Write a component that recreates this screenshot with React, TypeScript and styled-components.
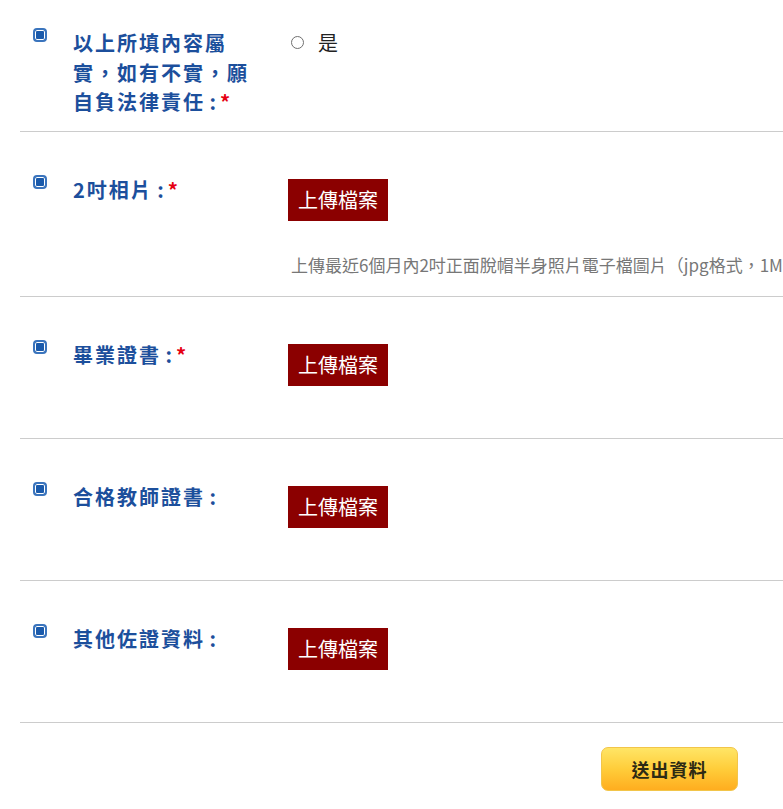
import React, { useState } from "react";
import styled, { createGlobalStyle } from "styled-components";

const GlobalStyle = createGlobalStyle`
  html, body {
    margin: 0;
    padding: 0;
    background: #fff;
    overflow-x: hidden;
  }
  body {
    font-family: "Noto Sans CJK TC", "Noto Sans", sans-serif;
  }
`;

const Form = styled.form`
  width: 1299px;
  margin-left: 20px;
`;

const Row = styled.div<{ $top?: number; $bottom?: number }>`
  display: flex;
  align-items: flex-start;
  padding: ${(p) => p.$top ?? 43}px 0 ${(p) => p.$bottom ?? 52}px 13px;
  border-bottom: 1px solid #cccccc;
`;

const Bullet = styled.span`
  flex: none;
  box-sizing: border-box;
  width: 14px;
  height: 14px;
  margin-right: 26px;
  border: 2px solid #3a74bd;
  border-radius: 4px;
  background: #1a5aab;
  box-shadow: inset 0 0 0 1px #ffffff;
`;

const Label = styled.div`
  flex: none;
  width: 190px;
  margin-right: 25px;
  color: #1c4f9c;
  font-size: 20px;
  font-weight: 700;
  line-height: 29.5px;
  letter-spacing: 2px;
`;

const Colon = styled.span`
  letter-spacing: 0;
  padding-right: 4px;
`;

const Required = styled.span`
  color: #e60012;
  letter-spacing: 0;
`;

const Value = styled.div`
  flex: 1;
  min-width: 0;
`;

const RadioLabel = styled.label`
  display: inline-flex;
  align-items: center;
  gap: 14px;
  margin-left: 3px;
  color: #222;
  font-size: 20px;
  line-height: 29.5px;
  cursor: pointer;
`;

const Radio = styled.input`
  appearance: none;
  box-sizing: border-box;
  width: 13px;
  height: 13px;
  margin: 0;
  border: 1px solid #6f6f6f;
  border-radius: 50%;
  background: #fff;

  &:checked {
    background: radial-gradient(circle, #1a5aab 0 3px, #fff 3.5px);
  }
`;

const UploadButton = styled.button`
  display: block;
  margin-top: 4px;
  padding: 6px 10px;
  border: 0;
  background: #8b0000;
  color: #fff;
  font-family: inherit;
  font-size: 20px;
  line-height: 30px;
  cursor: pointer;
`;

const Hint = styled.p`
  margin: 32px 0 0 3px;
  color: #777;
  font-size: 17px;
  line-height: 23px;
  white-space: nowrap;
`;

const Actions = styled.div`
  display: flex;
  justify-content: center;
  padding: 24px 0 20px;
`;

const SubmitButton = styled.button`
  width: 137px;
  height: 44px;
  border: 1px solid #f2c54a;
  border-radius: 7px;
  background: linear-gradient(to bottom, #ffe566 0%, #ffcd3a 50%, #ffad1f 100%);
  color: #2d2a14;
  font-family: inherit;
  font-size: 18px;
  font-weight: 700;
  letter-spacing: 1px;
  cursor: pointer;
`;

const FieldLabel: React.FC<{ text: string; required?: boolean }> = function ({
  text,
  required,
}) {
  return (
    <Label>
      {text}
      <Colon> :</Colon>
      {required && <Required>*</Required>}
    </Label>
  );
};

type UploadRowProps = {
  label: string;
  required?: boolean;
  hint?: string;
};

const UploadRow: React.FC<UploadRowProps> = function ({ label, required, hint }) {
  return (
    <Row $bottom={hint ? 20 : 52}>
      <Bullet />
      <FieldLabel text={label} required={required} />
      <Value>
        <UploadButton type="button">上傳檔案</UploadButton>
        {hint && <Hint>{hint}</Hint>}
      </Value>
    </Row>
  );
};

const App: React.FC = function () {
  const [agreed, setAgreed] = useState<boolean>(false);

  return (
    <>
      <GlobalStyle />
      <Form onSubmit={(e) => e.preventDefault()}>
        <Row $top={28} $bottom={14}>
          <Bullet />
          <FieldLabel text="以上所填內容屬實，如有不實，願自負法律責任" required />
          <Value>
            <RadioLabel>
              <Radio
                type="radio"
                name="agree"
                checked={agreed}
                onChange={() => setAgreed(true)}
              />
              是
            </RadioLabel>
          </Value>
        </Row>
        <UploadRow
          label="2吋相片"
          required
          hint="上傳最近6個月內2吋正面脫帽半身照片電子檔圖片（jpg格式，1MB以內）"
        />
        <UploadRow label="畢業證書" required />
        <UploadRow label="合格教師證書" />
        <UploadRow label="其他佐證資料" />
        <Actions>
          <SubmitButton type="submit">送出資料</SubmitButton>
        </Actions>
      </Form>
    </>
  );
};

export default App;
